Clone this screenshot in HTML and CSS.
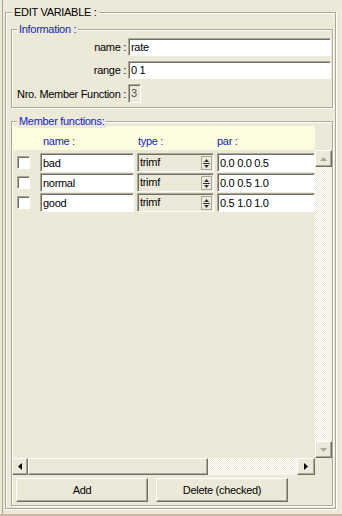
FILE: index.html
```html
<html><head>
<title>Edit Variable</title>
<link rel="stylesheet" href="styles.css">
</head>
<body>
<div class="window">
  <div class="group outer">
    <span class="group-title dark">EDIT VARIABLE :</span>

    <div class="group info">
      <span class="group-title">Information :</span>
      <div class="form-grid">
        <label for="varName">name :</label>
        <input class="field" id="varName" type="text" value="rate">
        <label for="varRange">range :</label>
        <input class="field" id="varRange" type="text" value="0 1">
        <label>Nro. Member Function :</label>
        <div class="field small disabled">3</div>
      </div>
    </div>

    <div class="group members">
      <span class="group-title">Member functions:</span>
      <div class="pane">
        <div class="pane-head">
          <div class="head-cells">
            <span class="cell-check"></span>
            <span class="col-name">name :</span>
            <span class="col-type">type :</span>
            <span class="col-par">par :</span>
          </div>
        </div>
        <div class="pane-body">
          <div class="viewport">
            <div class="mf-row">
              <span class="check"></span>
              <input class="field col-name" type="text" value="bad">
              <div class="field col-type disabled">trimf<svg class="spin" width="11" height="14" viewBox="0 0 11 14"><rect x="0.5" y="0.5" width="10" height="13" fill="#ece9d8" stroke="#aca899"/><polygon points="3,6 5.5,3 8,6" fill="#333"/><line x1="2" y1="7.5" x2="9" y2="7.5" stroke="#333"/><polygon points="3,9 8,9 5.5,12" fill="#333"/></svg></div>
              <input class="field col-par" type="text" value="0.0 0.0 0.5">
            </div>
            <div class="mf-row">
              <span class="check"></span>
              <input class="field col-name" type="text" value="normal">
              <div class="field col-type disabled">trimf<svg class="spin" width="11" height="14" viewBox="0 0 11 14"><rect x="0.5" y="0.5" width="10" height="13" fill="#ece9d8" stroke="#aca899"/><polygon points="3,6 5.5,3 8,6" fill="#333"/><line x1="2" y1="7.5" x2="9" y2="7.5" stroke="#333"/><polygon points="3,9 8,9 5.5,12" fill="#333"/></svg></div>
              <input class="field col-par" type="text" value="0.0 0.5 1.0">
            </div>
            <div class="mf-row">
              <span class="check"></span>
              <input class="field col-name" type="text" value="good">
              <div class="field col-type disabled">trimf<svg class="spin" width="11" height="14" viewBox="0 0 11 14"><rect x="0.5" y="0.5" width="10" height="13" fill="#ece9d8" stroke="#aca899"/><polygon points="3,6 5.5,3 8,6" fill="#333"/><line x1="2" y1="7.5" x2="9" y2="7.5" stroke="#333"/><polygon points="3,9 8,9 5.5,12" fill="#333"/></svg></div>
              <input class="field col-par" type="text" value="0.5 1.0 1.0">
            </div>
          </div>
          <div class="vscroll">
            <div class="sb-btn"><svg width="7" height="4" viewBox="0 0 7 4"><polygon points="0,4 3.5,0 7,4" fill="#aca899"/></svg></div>
            <div class="sb-track"></div>
            <div class="sb-btn"><svg width="7" height="4" viewBox="0 0 7 4"><polygon points="0,0 7,0 3.5,4" fill="#aca899"/></svg></div>
          </div>
        </div>
        <div class="pane-foot">
          <div class="hscroll">
            <div class="sb-btn"><svg width="4" height="7" viewBox="0 0 4 7"><polygon points="4,0 4,7 0,3.5" fill="#000"/></svg></div>
            <div class="sb-thumb"></div>
            <div class="sb-track"></div>
            <div class="sb-btn"><svg width="4" height="7" viewBox="0 0 4 7"><polygon points="0,0 4,3.5 0,7" fill="#000"/></svg></div>
          </div>
          <div class="corner"></div>
        </div>
      </div>
      <div class="actions">
        <button class="btn">Add</button>
        <button class="btn">Delete (checked)</button>
      </div>
    </div>
  </div>
</div>
</body></html>
```

FILE: styles.css
```css
* {
  box-sizing: border-box;
}

body {
  margin: 0;
  background-color: #ece9d8;
  font-family: "Liberation Sans", Arial, sans-serif;
  font-size: 11px;
  letter-spacing: -0.3px;
  color: #000;
}

.window {
  width: 342px;
  height: 516px;
  display: flex;
  flex-direction: column;
  padding: 12px 6px 5px 5px;
  border-bottom: 2px solid #cdb6a8;
  background: linear-gradient(to right, transparent 2px, #aca899 2px 3px, transparent 3px);
}

/* etched group boxes */
.group {
  position: relative;
  border: 1px solid #aca899;
  box-shadow: inset 1px 1px 0 #fff, 1px 1px 0 #fff;
}

.group-title {
  position: absolute;
  top: -7px;
  left: 5px;
  padding: 0 2px;
  line-height: 13px;
  background-color: #ece9d8;
  color: #1424c0;
}

.group-title.dark {
  left: 6px;
  color: #000;
}

.outer {
  flex: 1;
  display: flex;
  flex-direction: column;
  padding: 16px 2px 2px 5px;
}

.info {
  padding: 8px 1px 4px 0;
}

.form-grid {
  display: grid;
  grid-template-columns: 114px 1fr;
  column-gap: 2px;
  row-gap: 5px;
  align-items: center;
}

.form-grid label {
  text-align: right;
}

.field {
  height: 18px;
  margin: 0;
  padding: 0 2px;
  font-family: inherit;
  font-size: 11px;
  letter-spacing: -0.3px;
  line-height: 16px;
  color: #000;
  background-color: #fff;
  border: 1px solid;
  border-color: #aca899 #fff #fff #aca899;
  box-shadow: inset 1px 1px 0 #716f64;
  outline: none;
}

.field.disabled {
  background-color: #ece9d8;
}

.field.small {
  width: 13px;
  height: 19px;
  line-height: 17px;
  padding: 0 1px 0 2px;
  color: #555;
}

.members {
  flex: 1;
  display: flex;
  flex-direction: column;
  margin-top: 13px;
  padding: 4px 0 3px 0;
}

.pane {
  flex: 1;
  display: flex;
  flex-direction: column;
}

.pane-head {
  height: 24px;
  padding-right: 17px;
}

.head-cells {
  height: 100%;
  display: flex;
  padding-top: 9px;
  line-height: 13px;
  background-color: #fcfcdf;
  color: #1424c0;
}

.head-cells .col-name { padding-left: 3px; }
.head-cells .col-type { padding-left: 1px; }
.head-cells .col-par { padding-left: 0; }

.cell-check {
  width: 13px;
  margin: 0 10px 0 5px;
}

.col-name { width: 94px; margin-right: 3px; }
.col-type { width: 77px; margin-right: 3px; }
.col-par { width: 98px; }

.pane-body {
  flex: 1;
  display: flex;
}

.viewport {
  flex: 1;
  padding-top: 3px;
}

.mf-row {
  display: flex;
  align-items: center;
  height: 19px;
  margin-bottom: 1px;
}

.mf-row .field {
  height: 19px;
  line-height: 17px;
}

.check {
  width: 13px;
  height: 13px;
  margin: 0 10px 0 5px;
  background-color: #fff;
  border: 1px solid;
  border-color: #aca899 #fff #fff #aca899;
  box-shadow: inset 1px 1px 0 #716f64;
}

.col-type.field {
  display: flex;
  align-items: center;
  justify-content: space-between;
  padding-right: 1px;
}

.spin {
  display: block;
}

/* scrollbars */
.vscroll {
  width: 17px;
  display: flex;
  flex-direction: column;
}

.sb-btn {
  width: 17px;
  height: 17px;
  display: flex;
  align-items: center;
  justify-content: center;
  background-color: #ece9d8;
  border: 1px solid;
  border-color: #fff #716f64 #716f64 #fff;
  box-shadow: inset -1px -1px 0 #aca899;
}

.sb-track {
  flex: 1;
  background: repeating-conic-gradient(#fff 0 25%, #ece9d8 0 50%) 0 0 / 2px 2px;
}

.pane-foot {
  height: 17px;
  display: flex;
}

.hscroll {
  flex: 1;
  display: flex;
}

.hscroll .sb-btn {
  width: 16px;
}

.hscroll .sb-btn:last-child {
  width: 18px;
}

.sb-thumb {
  width: 180px;
  background-color: #ece9d8;
  border: 1px solid;
  border-color: #fff #716f64 #716f64 #fff;
  box-shadow: inset -1px -1px 0 #aca899;
}

.corner {
  width: 17px;
}

.actions {
  display: flex;
  gap: 8px;
  margin-top: 3px;
  padding-left: 4px;
}

.btn {
  width: 132px;
  height: 24px;
  margin: 0;
  padding: 0;
  font-family: inherit;
  font-size: 11px;
  letter-spacing: -0.3px;
  color: #000;
  background-color: #ece9d8;
  border: 1px solid;
  border-color: #fff #716f64 #716f64 #fff;
  box-shadow: inset -1px -1px 0 #aca899;
}
```
